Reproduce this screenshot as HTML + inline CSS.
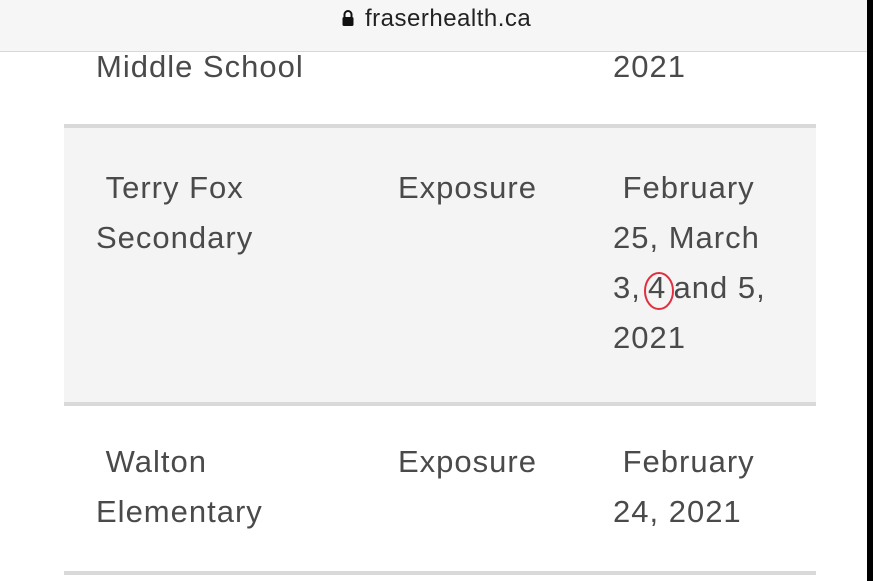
<!DOCTYPE html>
<html><head><style>
body{margin:0;width:873px;height:581px;overflow:hidden;background:#fff;position:relative;font-family:"Liberation Sans",Arial,sans-serif;color:#4a4a4a}
.bar{position:absolute;left:0;top:0;width:873px;height:51px;background:#f6f6f6;border-bottom:1px solid #d8d8d8}
.url{position:absolute;top:5px;left:341px;font-size:24px;letter-spacing:0.5px;color:#222}
.edge{position:absolute;right:0;top:0;width:6px;height:581px;background:#000}
.t{position:absolute;font-size:31px;letter-spacing:1px;line-height:50px;white-space:nowrap}
.row1{position:absolute;left:64px;top:124px;width:752px;height:274px;background:#f4f4f4;border-top:4px solid #d9d9d9;border-bottom:4px solid #d9d9d9}
.line{position:absolute;left:64px;top:571px;width:752px;height:4px;background:#d9d9d9}
</style></head><body>
<div class="bar"><div class="url"><svg width="14" height="18" viewBox="0 0 14 18" style="vertical-align:-1px;margin-right:10px"><path d="M3.5 8V5.5a3.5 3.5 0 0 1 7 0V8" fill="none" stroke="#111" stroke-width="2"/><rect x="1.5" y="8" width="11" height="9" rx="1.5" fill="#111"/></svg>fraserhealth.ca</div></div>
<div class="t" style="left:96px;top:42px">Middle School</div>
<div class="t" style="left:613px;top:42px">2021</div>
<div class="row1"></div>
<div class="t" style="left:96px;top:163px">&nbsp;Terry Fox<br>Secondary</div>
<div class="t" style="left:398px;top:163px">Exposure</div>
<div class="t" style="left:613px;top:163px">&nbsp;February<br>25, March<br>3,&thinsp;4&thinsp;and 5,<br>2021</div>
<svg style="position:absolute;left:640px;top:269px" width="42" height="44"><ellipse cx="19" cy="22" rx="14" ry="18" fill="none" stroke="#e03040" stroke-width="2"/></svg>
<div class="t" style="left:96px;top:437px">&nbsp;Walton<br>Elementary</div>
<div class="t" style="left:398px;top:437px">Exposure</div>
<div class="t" style="left:613px;top:437px">&nbsp;February<br>24, 2021</div>
<div class="line"></div>
<div class="edge"></div>
</body></html>
